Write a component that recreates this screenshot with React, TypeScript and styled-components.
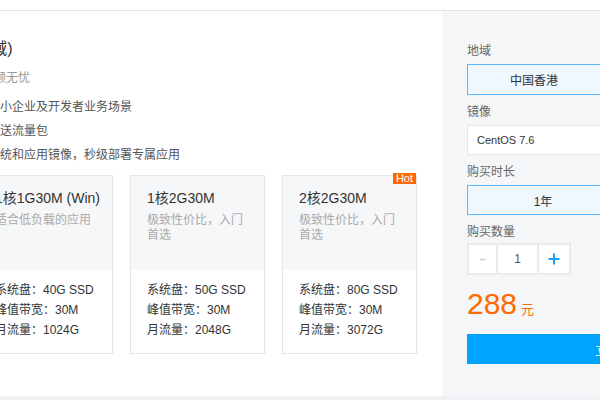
import styled, { createGlobalStyle } from "styled-components";

const GlobalStyle = createGlobalStyle`
    html, body {
        margin: 0;
        padding: 0;
        overflow: hidden;
        background: #eff1f4;
    }
    body {
        font-family: "Liberation Sans", "Noto Sans CJK SC", sans-serif;
        color: #333;
    }
`;

const Page = styled.div`
    width: 804px;
`;
const TopBar = styled.div`
    height: 10px;
    background: #fff;
    border-bottom: 1px solid #e4e4e4;
`;
const Main = styled.div`
    display: flex;
    height: 385px;
    background: #fff;
`;

// left: product intro + plans
const Intro = styled.div`
    flex: none;
    width: 442px;
`;
const Column = styled.div`
    margin-left: -174px;
    padding-top: 26px;
`;
const Title = styled.h2`
    margin: 0;
    font-size: 16px;
    font-weight: normal;
    line-height: 24px;
    color: #333;
`;
const Subtitle = styled.p`
    margin: 7px 0 0;
    font-size: 12px;
    line-height: 20px;
    color: #999;
`;
const Features = styled.ul`
    margin: 7px 0 0;
    padding: 0;
    list-style: none;
`;
const Feature = styled.li`
    display: flex;
    align-items: center;
    font-size: 12px;
    line-height: 24px;
    color: #555;
    &::before {
        content: "";
        width: 4px;
        height: 4px;
        border-radius: 50%;
        background: #bbb;
        margin-right: 2px;
    }
`;
const Plans = styled.div`
    display: flex;
    gap: 17px;
    margin-top: 8px;
`;
const Plan = styled.div`
    position: relative;
    flex: none;
    width: 135px;
    height: 179px;
    box-sizing: border-box;
    border: 1px solid #e6e6e6;
    background: #fff;
`;
const PlanHead = styled.div`
    height: 94px;
    box-sizing: border-box;
    padding: 12px 16px 0;
    background: #f6f7f9;
`;
const PlanName = styled.div`
    font-size: 14px;
    line-height: 20px;
    color: #333;
    white-space: nowrap;
`;
const PlanDesc = styled.div`
    margin-top: 5px;
    font-size: 12px;
    line-height: 15px;
    color: #aaa;
`;
const PlanSpecs = styled.div`
    padding: 10px 16px 0;
    font-size: 12px;
    line-height: 20px;
    color: #333;
    white-space: nowrap;
`;
const HotBadge = styled.span`
    position: absolute;
    top: -3px;
    right: 0;
    padding: 0 3px;
    background: #ff6a00;
    color: #fff;
    font-size: 11px;
    line-height: 11px;
`;

// right: order form
const Order = styled.div`
    flex: none;
    width: 362px;
    box-sizing: border-box;
    padding: 31px 25px 0;
    background: #f5f6f8;
`;
const Field = styled.div`
    & + & {
        margin-top: 8px;
    }
`;
const Label = styled.div`
    margin-bottom: 4px;
    font-size: 12px;
    line-height: 18px;
    color: #666;
`;
const Options = styled.div<{ $cols: string }>`
    display: grid;
    grid-template-columns: ${(p) => p.$cols};
    gap: 8px;
`;
const Option = styled.div<{ $active?: boolean; $h?: number }>`
    height: ${(p) => p.$h ?? 30}px;
    box-sizing: border-box;
    display: flex;
    align-items: center;
    justify-content: center;
    border: 1px solid ${(p) => (p.$active ? "#57b8ff" : "#e6e6e6")};
    background: ${(p) => (p.$active ? "#eff7ff" : "#fff")};
    font-size: 12px;
    color: #333;
`;
const Select = styled.div`
    height: 30px;
    box-sizing: border-box;
    padding-left: 9px;
    border: 1px solid #e6e6e6;
    background: #fff;
    font-size: 11px;
    line-height: 28px;
    color: #333;
`;
const Stepper = styled.div`
    display: inline-flex;
    height: 32px;
    margin-top: -2px;
    box-sizing: border-box;
    border: 2px solid #ebebeb;
    background: #fff;
`;
const StepCell = styled.div<{ $w: number }>`
    width: ${(p) => p.$w}px;
    display: flex;
    align-items: center;
    justify-content: center;
    font-size: 12px;
    color: #555;
    & + & {
        border-left: 2px solid #ebebeb;
    }
`;
const Price = styled.div`
    display: flex;
    align-items: baseline;
    margin-top: 11px;
    color: #ff6a00;
`;
const PriceNum = styled.span`
    font-size: 30px;
    line-height: 36px;
`;
const Unit = styled.span`
    margin-left: 4px;
    font-size: 13px;
`;
const BuyButton = styled.button`
    display: block;
    width: 100%;
    height: 30px;
    margin-top: 12px;
    border: none;
    background: #00a4ff;
    color: #fff;
    font-family: inherit;
    font-size: 14px;
`;

const plans = [
    { name: "1核1G30M (Linux)", desc: "适合入门级的应用", disk: "25G SSD", bw: "30M", flow: "1024G" },
    { name: "1核1G30M (Win)", desc: "适合低负载的应用", disk: "40G SSD", bw: "30M", flow: "1024G" },
    { name: "1核2G30M", desc: "极致性价比，入门首选", disk: "50G SSD", bw: "30M", flow: "2048G" },
    { name: "2核2G30M", desc: "极致性价比，入门首选", disk: "80G SSD", bw: "30M", flow: "3072G", hot: true },
];

const App = () => {
    return (
        <Page>
            <GlobalStyle />
            <TopBar />
            <Main>
                <Intro>
                    <Column>
                        <Title>轻量应用服务器(香港地域)</Title>
                        <Subtitle>高可用架构，安全稳定，运维后顾无忧</Subtitle>
                        <Features>
                            <Feature>广泛适用于网站建设、电商等中小企业及开发者业务场景</Feature>
                            <Feature>价格透明，按需付费，购买即赠送流量包</Feature>
                            <Feature>一键重装，提供多种主流操作系统和应用镜像，秒级部署专属应用</Feature>
                        </Features>
                        <Plans>
                            {plans.map((p) => (
                                <Plan key={p.name}>
                                    {p.hot && <HotBadge>Hot</HotBadge>}
                                    <PlanHead>
                                        <PlanName>{p.name}</PlanName>
                                        <PlanDesc>{p.desc}</PlanDesc>
                                    </PlanHead>
                                    <PlanSpecs>
                                        <div>系统盘：{p.disk}</div>
                                        <div>峰值带宽：{p.bw}</div>
                                        <div>月流量：{p.flow}</div>
                                    </PlanSpecs>
                                </Plan>
                            ))}
                        </Plans>
                    </Column>
                </Intro>
                <Order>
                    <Field>
                        <Label>地域</Label>
                        <Options $cols="134px 134px">
                            <Option $active $h={31}>中国香港</Option>
                            <Option $h={31}>美国硅谷</Option>
                        </Options>
                    </Field>
                    <Field>
                        <Label>镜像</Label>
                        <Select>CentOS 7.6</Select>
                    </Field>
                    <Field>
                        <Label>购买时长</Label>
                        <Options $cols="1fr 1fr">
                            <Option $active>1年</Option>
                            <Option>2年</Option>
                        </Options>
                    </Field>
                    <Field>
                        <Label>购买数量</Label>
                        <Stepper>
                            <StepCell $w={27}>
                                <svg width="8" height="8" viewBox="0 0 8 8">
                                    <path d="M1 4.5h6" stroke="#c8c8c8" strokeWidth="1.4" />
                                </svg>
                            </StepCell>
                            <StepCell $w={39}>1</StepCell>
                            <StepCell $w={30}>
                                <svg width="12" height="12" viewBox="0 0 12 12">
                                    <path d="M6 0.5v11M0.5 6h11" stroke="#1a9fff" strokeWidth="2" />
                                </svg>
                            </StepCell>
                        </Stepper>
                    </Field>
                    <Price>
                        <PriceNum>288</PriceNum>
                        <Unit>元</Unit>
                    </Price>
                    <BuyButton>立即购买</BuyButton>
                </Order>
            </Main>
        </Page>
    );
};

export default App;
